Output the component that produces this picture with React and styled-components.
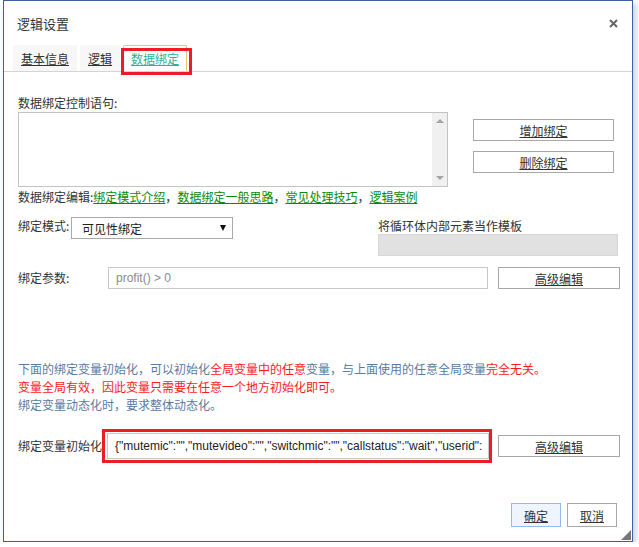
import React from 'react';
import styled, { createGlobalStyle } from 'styled-components';

const GlobalStyle = createGlobalStyle`
  html, body {
    margin: 0;
    padding: 0;
    background: #ffffff;
  }
  body {
    font-family: "Liberation Sans", "Noto Sans CJK SC", sans-serif;
    font-size: 12px;
    color: #333;
  }
`;

const Dialog = styled.div`
  position: relative;
  box-sizing: border-box;
  width: 630px;
  height: 542px;
  margin-left: 3px;
  background: #fff;
  border: 1px solid #3b5f9f;
  box-shadow: 3px 3px 6px rgba(70, 100, 150, 0.3);
`;

const Header = styled.div`
  display: flex;
  align-items: center;
  justify-content: space-between;
  height: 44px;
  padding: 0 14px 0 13px;
`;

const Title = styled.div`
  font-family: "Noto Sans CJK SC", sans-serif;
  font-size: 13px;
  color: #333;
`;

const TabBar = styled.div`
  display: flex;
  gap: 3px;
  height: 26px;
  padding-left: 9px;
  border-bottom: 1px solid #d4d4d4;
`;

const Tab = styled.div`
  position: relative;
  box-sizing: border-box;
  width: ${p => p.w}px;
  display: flex;
  align-items: center;
  justify-content: center;
  font-family: "Noto Sans CJK SC", sans-serif;
  font-size: 12px;
  text-decoration: underline;
  color: ${p => p.active ? '#2bb39a' : '#333'};
  background: ${p => p.active ? '#fff' : '#f7f7f7'};
  border: ${p => p.active ? '1px solid #e9c27c' : 'none'};
  border-bottom: none;
  border-radius: 2px 2px 0 0;

  ${p => p.active && `
    &::after {
      content: '';
      position: absolute;
      top: 2px;
      left: -3px;
      right: -6px;
      bottom: -4px;
      border: 3px solid #ee1c25;
    }
  `}
`;

const Content = styled.div`
  padding: 23px 12px 0 14px;
`;

const Label = styled.div`
  font-family: "Noto Sans CJK SC", sans-serif;
  line-height: 16px;
  height: 16px;
  white-space: nowrap;
  ${p => p.w && `width: ${p.w}px; flex-shrink: 0;`}
  ${p => p.mt && `margin-top: ${p.mt}px;`}
`;

const StatementRow = styled.div`
  display: flex;
  margin-top: 1px;
`;

const ScrollBox = styled.div`
  box-sizing: border-box;
  width: 430px;
  height: 75px;
  border: 1px solid #c3c3c3;
  display: flex;
  justify-content: flex-end;
`;

const Track = styled.div`
  width: 15px;
  background: #f0f0f0;
  display: flex;
  flex-direction: column;
  justify-content: space-between;
  align-items: center;
  padding: 6px 0;
`;

const Arrow = styled.div`
  width: 0;
  height: 0;
  border-left: 4px solid transparent;
  border-right: 4px solid transparent;
  ${p => p.down ? 'border-top: 4px solid #a3a3a3;' : 'border-bottom: 4px solid #a3a3a3;'}
`;

const ButtonColumn = styled.div`
  display: flex;
  flex-direction: column;
  gap: 10px;
  padding-top: 7px;
  margin-left: 25px;
`;

const Button = styled.div`
  box-sizing: border-box;
  width: ${p => p.w}px;
  height: ${p => p.h || 22}px;
  display: flex;
  align-items: center;
  justify-content: center;
  flex-shrink: 0;
  font-family: "Noto Sans CJK SC", sans-serif;
  font-size: 12px;
  color: #333;
  text-decoration: underline;
  background: ${p => p.primary ? '#eef5ff' : '#fff'};
  border: 1px solid ${p => p.primary ? '#93baf0' : '#a8a8a8'};
  ${p => p.ml && `margin-left: ${p.ml}px;`}
`;

const LinkLine = styled.div`
  margin-top: 2px;
  font-family: "Noto Sans CJK SC", sans-serif;
  line-height: 16px;
`;

const Link = styled.span`
  color: #0a8a0a;
  text-decoration: underline;
`;

const ModeRow = styled.div`
  display: flex;
  align-items: flex-start;
  margin-top: 12px;
  height: 40px;
`;

const Select = styled.div`
  box-sizing: border-box;
  width: 162px;
  height: 22px;
  border: 1px solid #a9a9a9;
  display: flex;
  align-items: center;
  justify-content: space-between;
  padding: 0 6px 0 10px;
  font-family: "Noto Sans CJK SC", sans-serif;
  color: #222;
  font-size: 12px;
`;

const Caret = styled.span`
  width: 0;
  height: 0;
  border-left: 3.5px solid transparent;
  border-right: 3.5px solid transparent;
  border-top: 6px solid #111;
`;

const TemplateGroup = styled.div`
  margin-left: 145px;
  width: 240px;
  padding-top: 1px;
`;

const GreyBox = styled.div`
  height: 22px;
  background: #e1e1e1;
  border: 1px solid #d6d6d6;
  box-sizing: border-box;
`;

const FieldRow = styled.div`
  display: flex;
  align-items: center;
  margin-top: ${p => p.mt}px;
  height: ${p => p.h || 22}px;
`;

const Input = styled.div`
  box-sizing: border-box;
  width: ${p => p.w}px;
  height: ${p => p.h || 22}px;
  border: 1px solid #c8c8c8;
  display: flex;
  align-items: center;
  padding-left: 7px;
  overflow: hidden;
  white-space: nowrap;
  font-family: "Liberation Sans", Arial, sans-serif;
  font-size: 12px;
  color: ${p => p.placeholder ? '#8a8a8a' : '#222'};
  flex-shrink: 0;
`;

const Highlight = styled.div`
  position: relative;
  box-sizing: border-box;
  width: 390px;
  height: 34px;
  border: 3px solid #ee1c25;
  padding: 1px 2px;
  background: #fff;
  flex-shrink: 0;
`;

const Info = styled.div`
  margin-top: 71px;
  font-family: "Noto Sans CJK SC", sans-serif;
  font-size: 12px;
  line-height: 18px;
  color: #5a7b9e;
`;

const Red = styled.span`
  color: #ff1a1a;
`;

const Footer = styled.div`
  display: flex;
  justify-content: flex-end;
  gap: 6px;
  margin-top: 40px;
  padding-right: 3px;
`;

const Grip = styled.div`
  position: absolute;
  right: 1px;
  bottom: 1px;
  width: 0;
  height: 0;
  border-left: 10px solid transparent;
  border-bottom: 10px solid #777;
`;

const CloseIcon = () => (
  <svg width="9" height="9" viewBox="0 0 9 9">
    <path d="M1 1 L8 8 M8 1 L1 8" stroke="#666" strokeWidth="2" />
  </svg>
);

const App = () => (
  <>
    <GlobalStyle />
    <Dialog>
      <Header>
        <Title>逻辑设置</Title>
        <CloseIcon />
      </Header>
      <TabBar>
        <Tab w={64}>基本信息</Tab>
        <Tab w={40}>逻辑</Tab>
        <Tab w={64} active>数据绑定</Tab>
      </TabBar>
      <Content>
        <Label>数据绑定控制语句:</Label>
        <StatementRow>
          <ScrollBox>
            <Track>
              <Arrow />
              <Arrow down />
            </Track>
          </ScrollBox>
          <ButtonColumn>
            <Button w={141}>增加绑定</Button>
            <Button w={141}>删除绑定</Button>
          </ButtonColumn>
        </StatementRow>
        <LinkLine>
          数据绑定编辑:<Link>绑定模式介绍</Link>，<Link>数据绑定一般思路</Link>，<Link>常见处理技巧</Link>，<Link>逻辑案例</Link>
        </LinkLine>
        <ModeRow>
          <Label w={53} mt={1}>绑定模式:</Label>
          <Select>
            可见性绑定
            <Caret />
          </Select>
          <TemplateGroup>
            <Label>将循环体内部元素当作模板</Label>
            <GreyBox />
          </TemplateGroup>
        </ModeRow>
        <FieldRow mt={10}>
          <Label w={90}>绑定参数:</Label>
          <Input w={380} placeholder>profit() &gt; 0</Input>
          <Button w={122} ml={10}>高级编辑</Button>
        </FieldRow>
        <Info>
          <div>
            下面的绑定变量初始化，可以初始化<Red>全局变量中的任意</Red>变量，与上面使用的任意全局变量<Red>完全无关。</Red>
          </div>
          <div><Red>变量全局有效，因此变量只需要在任意一个地方初始化即可。</Red></div>
          <div>绑定变量动态化时，要求整体动态化。</div>
        </Info>
        <FieldRow mt={15} h={34}>
          <Label w={84}>绑定变量初始化:</Label>
          <Highlight>
            <Input w={382} h={26}>
              {'{"mutemic":"","mutevideo":"","switchmic":"","callstatus":"wait","userid":'}
            </Input>
          </Highlight>
          <Button w={122} ml={6}>高级编辑</Button>
        </FieldRow>
        <Footer>
          <Button w={50} h={24} primary>确定</Button>
          <Button w={50} h={24}>取消</Button>
        </Footer>
      </Content>
      <Grip />
    </Dialog>
  </>
);

export default App;
